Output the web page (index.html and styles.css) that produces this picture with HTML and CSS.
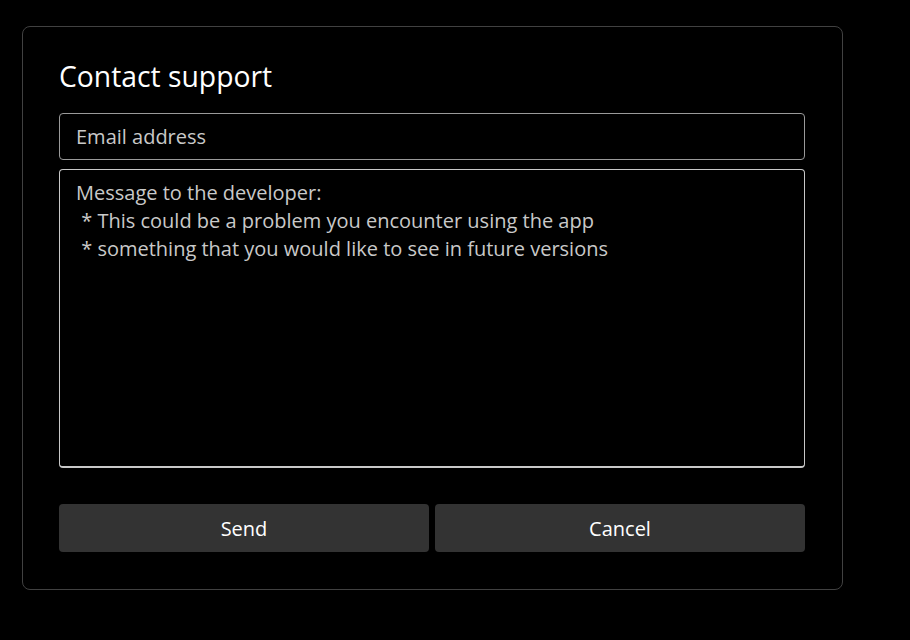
FILE: index.html
```html
<!DOCTYPE html>
<html>
<head>
<meta charset="utf-8">
<link rel="stylesheet" href="styles.css">
</head>
<body>
<div class="dialog">
  <h1 class="title">Contact support</h1>
  <div class="field email">Email address</div>
  <div class="field message">
    <div class="line">Message to the developer:</div>
    <div class="line">&nbsp;* This could be a problem you encounter using the app</div>
    <div class="line">&nbsp;* something that you would like to see in future versions</div>
  </div>
  <div class="actions">
    <button class="btn">Send</button>
    <button class="btn">Cancel</button>
  </div>
</div>
</body>
</html>
```
FILE: styles.css
```css
html, body {
  margin: 0;
  padding: 0;
  background: #000;
}
body {
  font-family: "Open Sans", "Noto Sans", sans-serif;
  color: #fff;
  width: 910px;
  height: 640px;
  overflow: hidden;
}
.dialog {
  box-sizing: border-box;
  margin: 26px 0 0 22px;
  width: 821px;
  height: 564px;
  border: 1px solid #414141;
  border-radius: 8px;
  padding: 29px 37px 0 36px;
  display: flex;
  flex-direction: column;
}
.title {
  margin: 0;
  font-size: 28.3px;
  font-weight: 400;
  line-height: 40px;
  height: 57px;
}
.field {
  box-sizing: border-box;
  border-radius: 4px;
  color: #c9c9c9;
  font-size: 20px;
  padding: 0 16px;
}
.email {
  height: 47px;
  border: 1px solid #9a9a9a;
  display: flex;
  align-items: center;
}
.message {
  margin-top: 9px;
  height: 299px;
  border: 1px solid #c8c8c8;
  border-bottom-width: 2px;
  padding-top: 9px;
  line-height: 28px;
}
.line {
  white-space: nowrap;
}
.actions {
  margin-top: 36px;
  display: flex;
  gap: 6px;
}
.btn {
  flex: 1;
  height: 48px;
  border: none;
  border-radius: 4px;
  background: #333;
  color: #fff;
  font-family: inherit;
  font-size: 20px;
  padding: 1px 0 0;
}
```
